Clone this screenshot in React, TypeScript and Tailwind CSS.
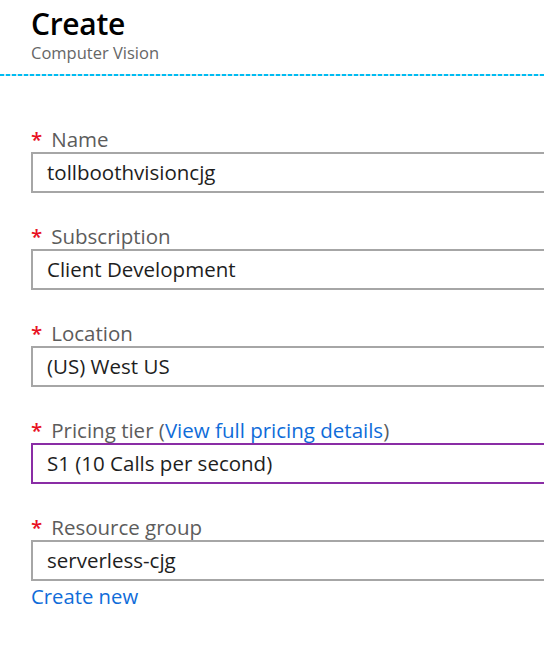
import React from 'react';

type Field = {
  label: string;
  value: string;
  focused?: boolean;
  link?: boolean;
};

const fields: Field[] = [
  { label: 'Name', value: 'tollboothvisioncjg' },
  { label: 'Subscription', value: 'Client Development' },
  { label: 'Location', value: '(US) West US' },
  { label: 'Pricing tier', value: 'S1 (10 Calls per second)', focused: true, link: true },
  { label: 'Resource group', value: 'serverless-cjg' },
];

export default function App() {
  return (
    <div className="w-[544px] h-[651px] overflow-hidden bg-white font-['Open_Sans',sans-serif]">
      <div className="pl-[31px] pt-[5px]">
        <h1 className="text-[30px] leading-[38px] font-semibold text-black tracking-[-0.3px]">Create</h1>
        <div className="text-[16.5px] leading-[22px] text-[#666] -mt-[1px]">Computer Vision</div>
      </div>
      <div className="mt-[10px] h-[2px] bg-[repeating-linear-gradient(90deg,#00bcf2_0_4px,#c8e6f0_4px_6px)]" />

      <div className="pl-[31px] pt-[51px]">
        {fields.map((f, i) => (
          <div key={f.label} className={i < fields.length - 1 ? 'mb-[31px]' : ''}>
            <div className="h-[25px] text-[20.5px] leading-[25px] text-[#5c5c5c] whitespace-nowrap">
              <span className="text-[#e81123] font-semibold mr-[9px]">*</span>
              {f.label}
              {f.link && (
                <>
                  {' ('}
                  <span className="text-[#0f6cd9]">View full pricing details</span>)
                </>
              )}
            </div>
            <div
              className={`h-[41px] border-2 border-r-0 flex items-center pl-[14px] text-[20.5px] text-[#1e1e1e] ${
                f.focused ? 'border-[#8a2da5]' : 'border-[#a6a6a6]'
              }`}
            >
              {f.value}
            </div>
          </div>
        ))}
        <div className="mt-[2px] text-[20.3px] leading-[26px] text-[#0f6cd9]">Create new</div>
      </div>
    </div>
  );
}
